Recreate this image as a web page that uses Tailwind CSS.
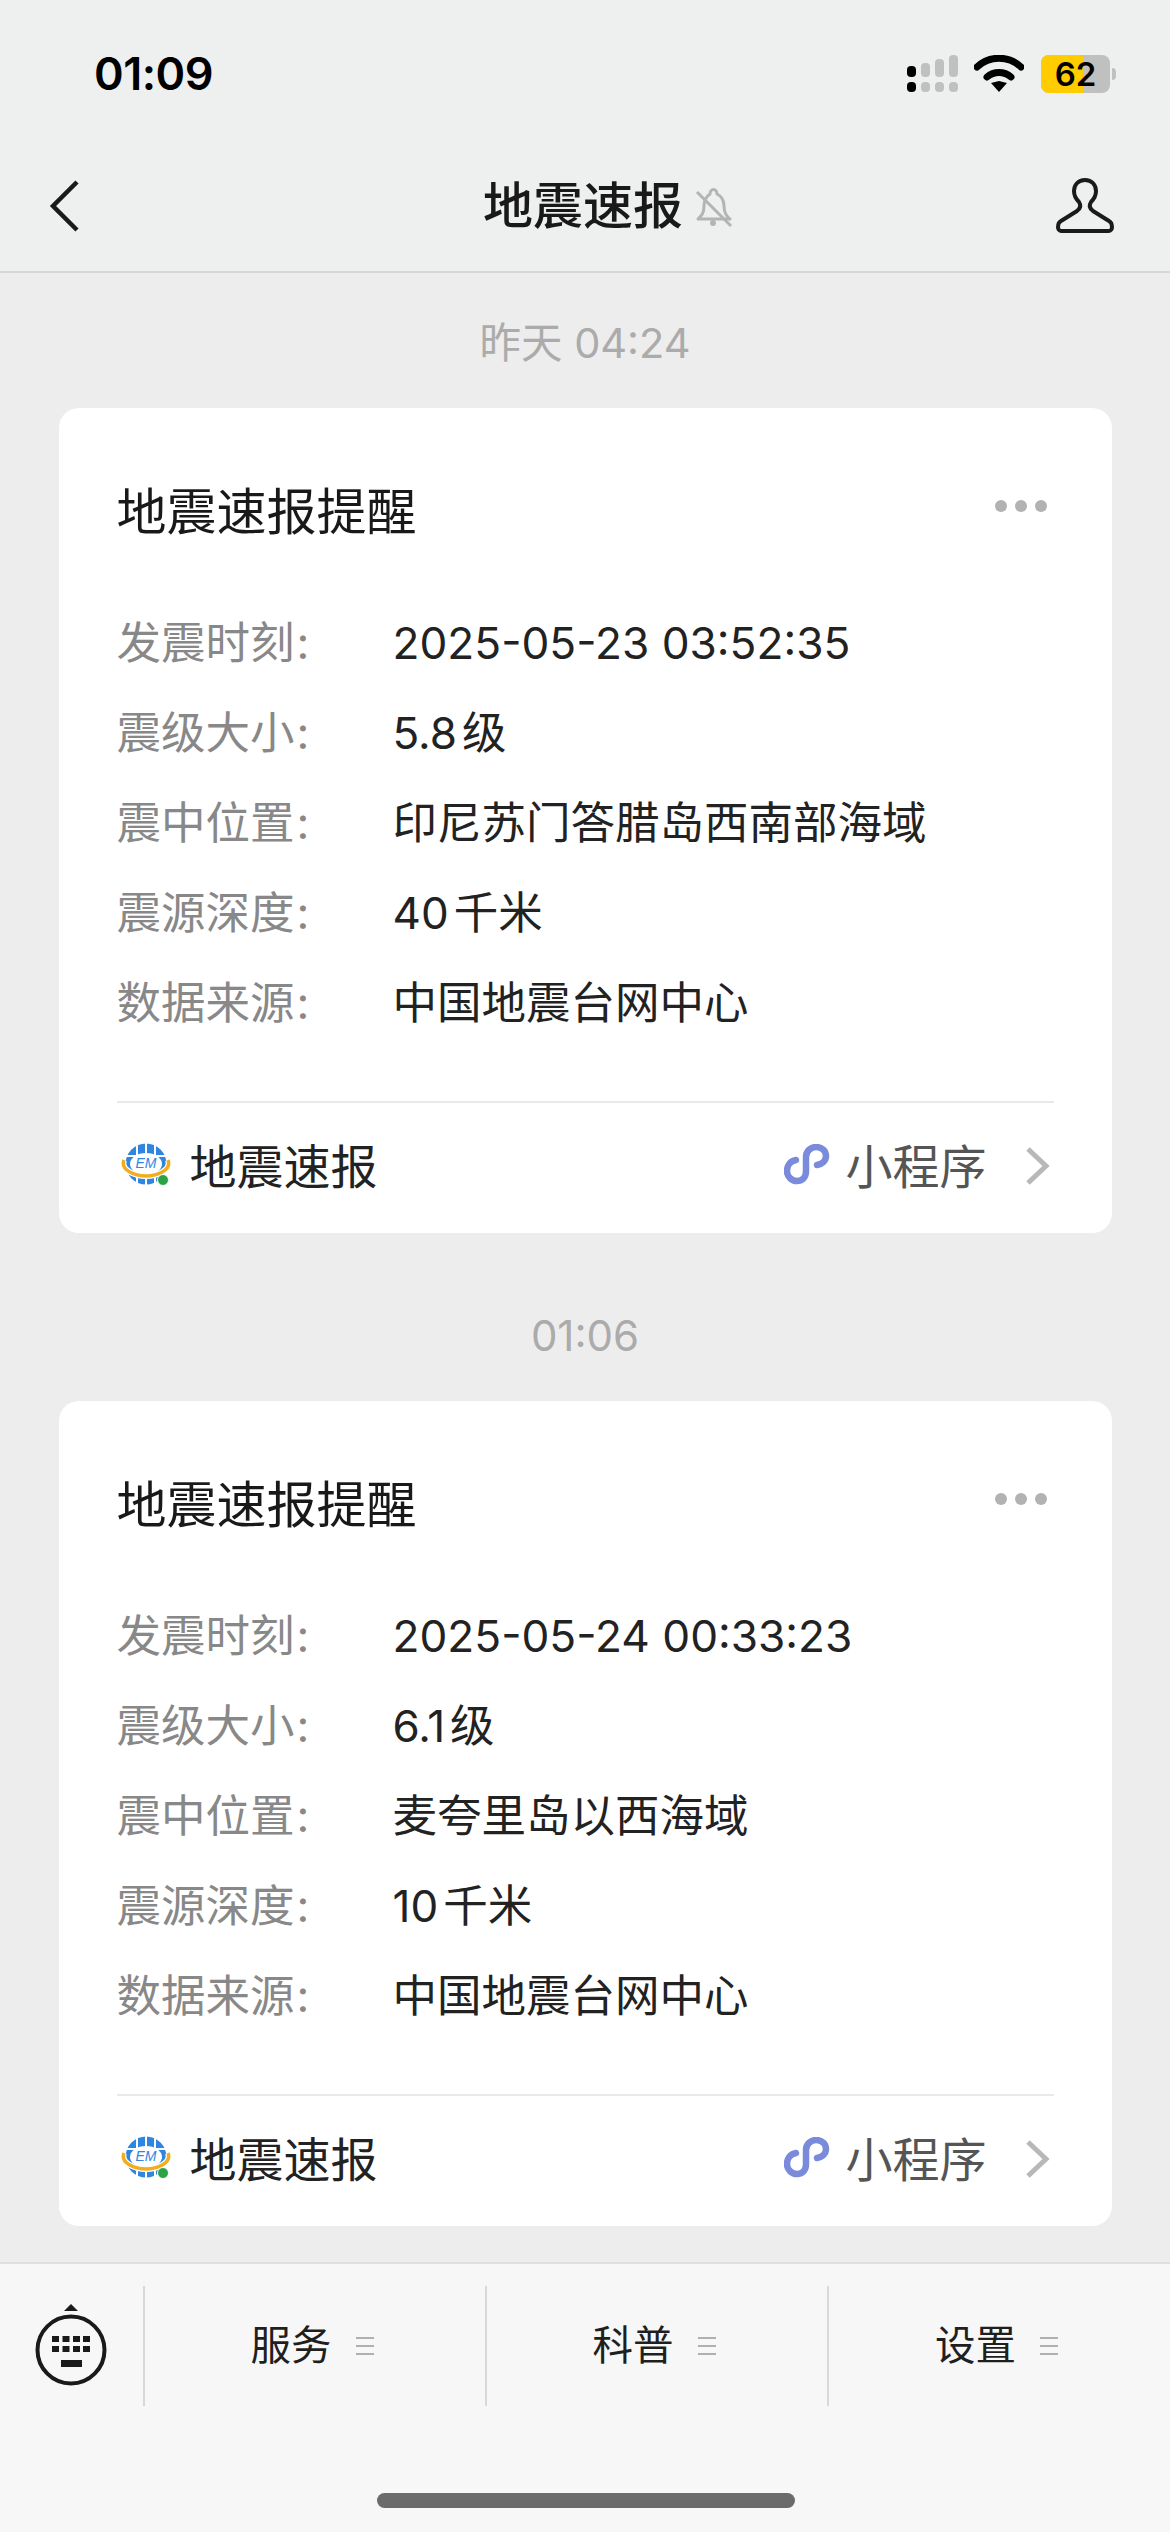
<!DOCTYPE html>
<html lang="zh-CN">
<head>
  <meta charset="UTF-8">
  <meta name="viewport" content="width=device-width, initial-scale=1.0">
  <title>地震速报</title>
  <script src="https://cdn.jsdelivr.net/npm/@tailwindcss/browser@4"></script>
</head>
<body class="bg-[#ededed] font-['Inter','Noto_Sans_CJK_SC',sans-serif]">
<div class="w-[1170px] h-[2532px] flex flex-col overflow-hidden">

  <!-- top bars -->
  <header class="h-[273px] shrink-0 bg-[#eeefef] border-b-2 border-[#d6d6d6] flex flex-col">
    <div class="h-[150px] flex items-center justify-between pl-[94px] pr-[54px]">
      <span class="text-[45px] font-semibold text-black tracking-[-0.5px] -mt-[2px]">01:09</span>
      <div class="flex items-center -mt-[2px]">
        <svg width="52" height="38" viewBox="0 0 52 38" class="mr-[15px]">
          <rect x="0" y="11" width="9" height="11" rx="4" fill="#000"/><rect x="0" y="27" width="9" height="10" rx="4" fill="#000"/>
          <rect x="14" y="8" width="9" height="14" rx="4" fill="#c0c0c0"/><rect x="14" y="27" width="9" height="10" rx="4" fill="#c0c0c0"/>
          <rect x="28" y="4" width="9" height="18" rx="4" fill="#c0c0c0"/><rect x="28" y="27" width="9" height="10" rx="4" fill="#c0c0c0"/>
          <rect x="42" y="0" width="9" height="22" rx="4" fill="#c0c0c0"/><rect x="42" y="27" width="9" height="10" rx="4" fill="#c0c0c0"/>
        </svg>
        <svg width="50" height="38" viewBox="0 0 50 38" class="mr-[17px]">
          <path d="M25 26l-8 2 8 9 8-9z" fill="#000"/>
          <path d="M3 12a32 32 0 0 1 44 0" fill="none" stroke="#000" stroke-width="7" stroke-linecap="round"/>
          <path d="M13 22a18 18 0 0 1 24 0" fill="none" stroke="#000" stroke-width="7" stroke-linecap="round"/>
        </svg>
        <div class="flex items-center gap-[2px]">
          <div class="relative w-[69px] h-[38px] rounded-[8px] overflow-hidden bg-[#c0c0c0] flex items-center justify-center">
            <div class="absolute left-0 top-0 bottom-0 w-[42px] bg-[#ffcc00]"></div>
            <span class="relative text-[33px] font-semibold leading-none text-black">62</span>
          </div>
          <div class="w-[4px] h-[12px] rounded-r-full bg-[#c0c0c0]"></div>
        </div>
      </div>
    </div>
    <div class="relative flex-1 flex items-center justify-between pl-[48px] pr-[55px] pb-[9px]">
      <svg width="32" height="52" viewBox="0 0 32 52"><path d="M29 2L5 26l24 24" fill="none" stroke="#1a1a1a" stroke-width="4.5"/></svg>
      <div class="absolute left-[483px] top-[21px] flex items-center gap-[12px]">
        <span class="text-[50px] font-medium text-[#191919] leading-[70px]">地震速报</span>
        <svg width="38" height="42" viewBox="0 0 38 42" class="mt-[2px]">
          <path d="M3 33c3-3 6-5 6-13 0-7 3-10 6-12 0-6 7-6 7 0 4 2 7 5 7 12 0 7 2 10 6 13H3z" fill="none" stroke="#b4b4b4" stroke-width="3" stroke-linejoin="round"/>
          <path d="M2 6l34 34" stroke="#b4b4b4" stroke-width="3"/>
          <circle cx="18" cy="37" r="3" fill="#b4b4b4"/>
        </svg>
      </div>
      <svg width="60" height="56" viewBox="0 0 60 56">
        <path d="M30 2c-7 0-11 5-11 11 0 5 2 8 5 11 2 3 2 6-2 9L6 43c-2 1-3 3-3 6 0 2 1 4 3 4h48c2 0 3-2 3-4 0-3-1-5-3-6L38 33c-4-3-4-6-2-9 3-3 5-6 5-11 0-6-4-11-11-11z" fill="none" stroke="#1a1a1a" stroke-width="4" stroke-linejoin="round"/>
      </svg>
    </div>
  </header>

  <main class="flex-1 flex flex-col items-center min-h-0">
    <p class="mt-[40px] h-[60px] leading-[60px] text-[41.5px] text-[#ababab]">昨天 04:24</p>
    <article class="mt-[35px] w-[1053px] h-[825px] shrink-0 bg-white rounded-[20px] px-[58px] flex flex-col">
      <div class="mt-[34px] flex items-center justify-between h-[140px] pr-[7px]">
        <h2 class="text-[50px] font-normal text-[#191919]">地震速报提醒</h2>
        <div class="flex gap-[8px] -mt-[13px]"><i class="w-[12px] h-[12px] rounded-full bg-[#b2b2b2]"></i><i class="w-[12px] h-[12px] rounded-full bg-[#b2b2b2]"></i><i class="w-[12px] h-[12px] rounded-full bg-[#b2b2b2]"></i></div>
      </div>
      <dl class="mt-[16px] flex flex-col text-[44.5px] leading-[90px]">
        <div class="flex"><dt class="w-[276px] text-[#888888]">发震时刻<span class="ml-[2px]">:</span></dt><dd class="text-[#222222] text-[44.2px]">2025-05-23 03:52:35</dd></div>
        <div class="flex"><dt class="w-[276px] text-[#888888]">震级大小<span class="ml-[2px]">:</span></dt><dd class="text-[#222222]"><span class="text-[44px]">5.8</span><span class="ml-[5px]">级</span></dd></div>
        <div class="flex"><dt class="w-[276px] text-[#888888]">震中位置<span class="ml-[2px]">:</span></dt><dd class="text-[#222222]">印尼苏门答腊岛西南部海域</dd></div>
        <div class="flex"><dt class="w-[276px] text-[#888888]">震源深度<span class="ml-[2px]">:</span></dt><dd class="text-[#222222]"><span class="text-[44px]">40</span><span class="ml-[5px]">千米</span></dd></div>
        <div class="flex"><dt class="w-[276px] text-[#888888]">数据来源<span class="ml-[2px]">:</span></dt><dd class="text-[#222222]">中国地震台网中心</dd></div>
      </dl>
      <div class="mt-auto h-[132px] border-t-2 border-[#e9e9e9] flex items-center justify-between pb-[4px]">
        <div class="flex items-center gap-[17px] pl-[4px]">
          <svg width="52" height="46" viewBox="0 0 52 46">
            <circle cx="25" cy="21" r="20.500" fill="#2f86e2"/>
            <path d="M4 13h42M4 30h42M16 1v42M25 0v44M34 1v42" stroke="#fff" stroke-width="2"/>
            <ellipse cx="25" cy="21" rx="16" ry="11" fill="#fff"/>
            <path d="M3 17C-1 27 14 33 25 33C36 33 51 27 47 17" fill="none" stroke="#fff" stroke-width="6"/>
            <path d="M3 17C-1 27 14 33 25 33C36 33 51 27 47 17" fill="none" stroke="#f2ad1c" stroke-width="3.500"/>
            <circle cx="42" cy="37" r="5.500" fill="#2aa245" stroke="#fff" stroke-width="1"/>
            <text x="25" y="25" text-anchor="middle" font-family="Liberation Sans" font-style="italic" font-size="14" fill="#2f86e2">EM</text>
          </svg>
          <span class="text-[47px] text-[#222222] leading-none">地震速报</span>
        </div>
        <div class="flex items-center gap-[14px] pr-[3px]">
          <svg width="48" height="44" viewBox="0 0 48 44"><path d="M12 16C6 17 3 22 3 27C3 33 8 37 13 37C19 37 22 33 22 27V13C22 7 27 3 32 3C38 3 42 7 42 12C42 17 38 20 33 21" fill="none" stroke="#7a8bdc" stroke-width="6.500" stroke-linecap="round"/></svg>
          <span class="text-[47px] text-[#555555] leading-none mr-[24px]">小程序</span>
          <svg width="26" height="40" viewBox="0 0 26 40"><path d="M3 3l18 17L3 37" fill="none" stroke="#b8b8b8" stroke-width="5"/></svg>
        </div>
      </div>
    </article>

    <p class="mt-[73px] h-[60px] leading-[60px] text-[42px] text-[#ababab]">01:06</p>
    <article class="mt-[35px] w-[1053px] h-[825px] shrink-0 bg-white rounded-[20px] px-[58px] flex flex-col">
      <div class="mt-[34px] flex items-center justify-between h-[140px] pr-[7px]">
        <h2 class="text-[50px] font-normal text-[#191919]">地震速报提醒</h2>
        <div class="flex gap-[8px] -mt-[13px]"><i class="w-[12px] h-[12px] rounded-full bg-[#b2b2b2]"></i><i class="w-[12px] h-[12px] rounded-full bg-[#b2b2b2]"></i><i class="w-[12px] h-[12px] rounded-full bg-[#b2b2b2]"></i></div>
      </div>
      <dl class="mt-[16px] flex flex-col text-[44.5px] leading-[90px]">
        <div class="flex"><dt class="w-[276px] text-[#888888]">发震时刻<span class="ml-[2px]">:</span></dt><dd class="text-[#222222] text-[44.2px]">2025-05-24 00:33:23</dd></div>
        <div class="flex"><dt class="w-[276px] text-[#888888]">震级大小<span class="ml-[2px]">:</span></dt><dd class="text-[#222222]"><span class="text-[44px]">6.1</span><span class="ml-[5px]">级</span></dd></div>
        <div class="flex"><dt class="w-[276px] text-[#888888]">震中位置<span class="ml-[2px]">:</span></dt><dd class="text-[#222222]">麦夸里岛以西海域</dd></div>
        <div class="flex"><dt class="w-[276px] text-[#888888]">震源深度<span class="ml-[2px]">:</span></dt><dd class="text-[#222222]"><span class="text-[44px]">10</span><span class="ml-[5px]">千米</span></dd></div>
        <div class="flex"><dt class="w-[276px] text-[#888888]">数据来源<span class="ml-[2px]">:</span></dt><dd class="text-[#222222]">中国地震台网中心</dd></div>
      </dl>
      <div class="mt-auto h-[132px] border-t-2 border-[#e9e9e9] flex items-center justify-between pb-[4px]">
        <div class="flex items-center gap-[17px] pl-[4px]">
          <svg width="52" height="46" viewBox="0 0 52 46">
            <circle cx="25" cy="21" r="20.500" fill="#2f86e2"/>
            <path d="M4 13h42M4 30h42M16 1v42M25 0v44M34 1v42" stroke="#fff" stroke-width="2"/>
            <ellipse cx="25" cy="21" rx="16" ry="11" fill="#fff"/>
            <path d="M3 17C-1 27 14 33 25 33C36 33 51 27 47 17" fill="none" stroke="#fff" stroke-width="6"/>
            <path d="M3 17C-1 27 14 33 25 33C36 33 51 27 47 17" fill="none" stroke="#f2ad1c" stroke-width="3.500"/>
            <circle cx="42" cy="37" r="5.500" fill="#2aa245" stroke="#fff" stroke-width="1"/>
            <text x="25" y="25" text-anchor="middle" font-family="Liberation Sans" font-style="italic" font-size="14" fill="#2f86e2">EM</text>
          </svg>
          <span class="text-[47px] text-[#222222] leading-none">地震速报</span>
        </div>
        <div class="flex items-center gap-[14px] pr-[3px]">
          <svg width="48" height="44" viewBox="0 0 48 44"><path d="M12 16C6 17 3 22 3 27C3 33 8 37 13 37C19 37 22 33 22 27V13C22 7 27 3 32 3C38 3 42 7 42 12C42 17 38 20 33 21" fill="none" stroke="#7a8bdc" stroke-width="6.500" stroke-linecap="round"/></svg>
          <span class="text-[47px] text-[#555555] leading-none mr-[24px]">小程序</span>
          <svg width="26" height="40" viewBox="0 0 26 40"><path d="M3 3l18 17L3 37" fill="none" stroke="#b8b8b8" stroke-width="5"/></svg>
        </div>
      </div>
    </article>
  </main>

  <!-- menu bar -->
  <footer class="relative h-[270px] shrink-0 bg-[#f7f7f7] border-t-2 border-[#dfdfdf]">
    <div class="flex h-[120px] mt-[22px] text-[40.5px] text-[#1f1f1f]">
      <div class="w-[145px] flex justify-center items-center border-r-2 border-[#d8d8d8]">
        <svg width="72" height="82" viewBox="0 0 72 82" class="-mt-[2px] -ml-[2px]">
          <path d="M36 0l7 7H29z" fill="#1a1a1a"/>
          <circle cx="36" cy="46" r="33.5" fill="none" stroke="#1a1a1a" stroke-width="4"/>
          <path fill="#1a1a1a" d="M17 32h7v6h-7zM27.500 32h7v6h-7zM38 32h7v6h-7zM48 32h7v6h-7zM17 42h7v6h-7zM27.500 42h7v6h-7zM38 42h7v6h-7zM48 42h7v6h-7zM26 56h21v7H26z"/>
        </svg>
      </div>
      <div class="w-[342px] flex justify-center items-center gap-[24px] pr-[6px] border-r-2 border-[#d8d8d8]"><span>服务</span><span class="w-[18px] h-[18px] border-y-2 border-[#b0b0b0] flex items-center"><i class="block w-full h-[2px] bg-[#b0b0b0]"></i></span></div>
      <div class="w-[342px] flex justify-center items-center gap-[24px] pr-[6px] border-r-2 border-[#d8d8d8]"><span>科普</span><span class="w-[18px] h-[18px] border-y-2 border-[#b0b0b0] flex items-center"><i class="block w-full h-[2px] bg-[#b0b0b0]"></i></span></div>
      <div class="flex-1 flex justify-center items-center gap-[24px] pr-[6px]"><span>设置</span><span class="w-[18px] h-[18px] border-y-2 border-[#b0b0b0] flex items-center"><i class="block w-full h-[2px] bg-[#b0b0b0]"></i></span></div>
    </div>
    <div class="absolute left-[377px] bottom-[24px] w-[418px] h-[15px] rounded-full bg-[#6b6b6b]"></div>
  </footer>
</div>
</body>
</html>
